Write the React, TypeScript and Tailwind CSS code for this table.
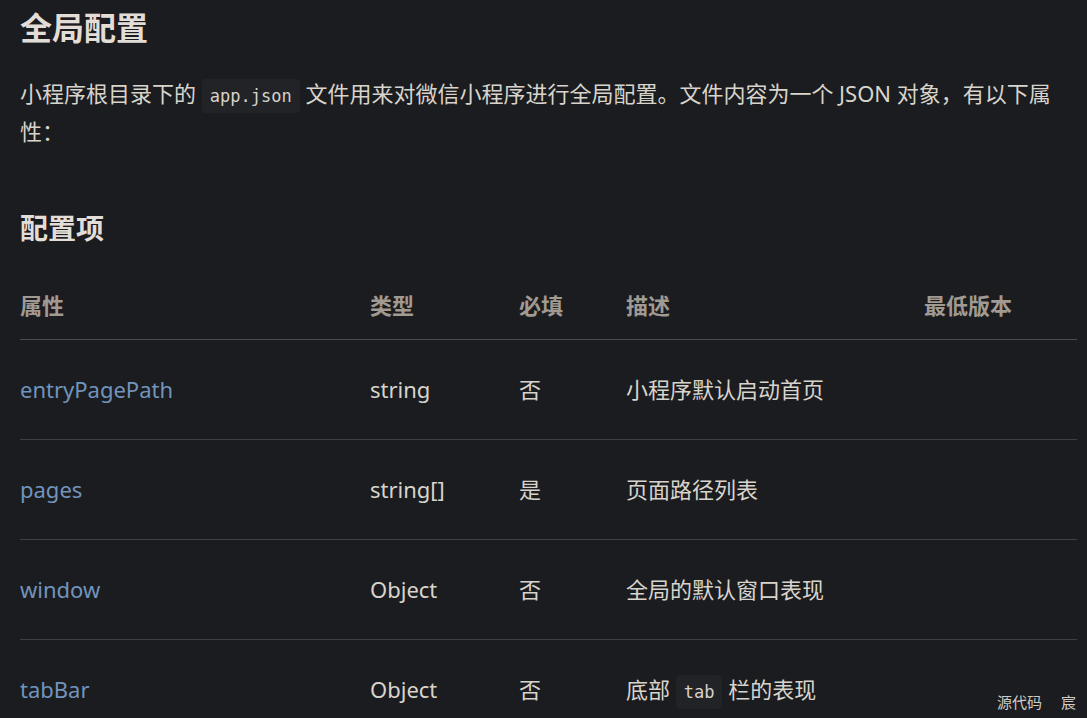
import React from "react";

const rows = [
  { name: "entryPagePath", type: "string", req: "否", desc: <>小程序默认启动首页</> },
  { name: "pages", type: "string[]", req: "是", desc: <>页面路径列表</> },
  { name: "window", type: "Object", req: "否", desc: <>全局的默认窗口表现</> },
  {
    name: "tabBar",
    type: "Object",
    req: "否",
    desc: (
      <>
        底部{" "}
        <code className="rounded-[4px] bg-[#222327] px-[8px] py-[7px] font-['DejaVu_Sans_Mono',monospace] text-[17px] text-[#d6d2ca]">
          tab
        </code>{" "}
        栏的表现
      </>
    ),
  },
];

export default function App() {
  return (
    <div className="relative h-[718px] w-[1087px] overflow-hidden bg-[#1b1c1f] font-['Noto_Sans','Noto_Sans_CJK_SC',sans-serif] text-[#d8d4cc]">
      <div className="pl-[20px] pr-[10px]">
        <h1 className="pt-[6px] text-[32px] font-bold leading-[44px] text-[#e2ded7]">全局配置</h1>
        <p className="mt-[26px] text-[22px] leading-[35px]">
          小程序根目录下的{" "}
          <code className="rounded-[4px] bg-[#222327] px-[8px] py-[7px] font-['DejaVu_Sans_Mono',monospace] text-[17px] text-[#d6d2ca]">
            app.json
          </code>{" "}
          文件用来对微信小程序进行全局配置。文件内容为一个 JSON 对象，有以下属性：
        </p>
        <h2 className="mt-[59px] text-[28px] font-bold leading-[40px] text-[#e2ded7]">配置项</h2>
        <div className="mt-[23px] w-[1057px]">
          <div className="grid h-[69px] grid-cols-[350px_149px_107px_298px_1fr] items-center border-b border-[#4b4c50] text-[22px] font-bold text-[#a09a92]">
            <div>属性</div>
            <div>类型</div>
            <div>必填</div>
            <div>描述</div>
            <div>最低版本</div>
          </div>
          {rows.map((r) => (
            <div
              key={r.name}
              className="grid h-[100px] grid-cols-[350px_149px_107px_298px_1fr] items-center border-b border-[#3f4043] text-[22px]"
            >
              <div className="text-[#7194bd]">{r.name}</div>
              <div>{r.type}</div>
              <div>{r.req}</div>
              <div>{r.desc}</div>
              <div></div>
            </div>
          ))}
        </div>
      </div>
      <div className="absolute bottom-[6px] right-[11px] flex gap-[19px] text-[15px] leading-[20px] text-[#cfcbc4]">
        <span>源代码</span>
        <span>宸</span>
      </div>
    </div>
  );
}
